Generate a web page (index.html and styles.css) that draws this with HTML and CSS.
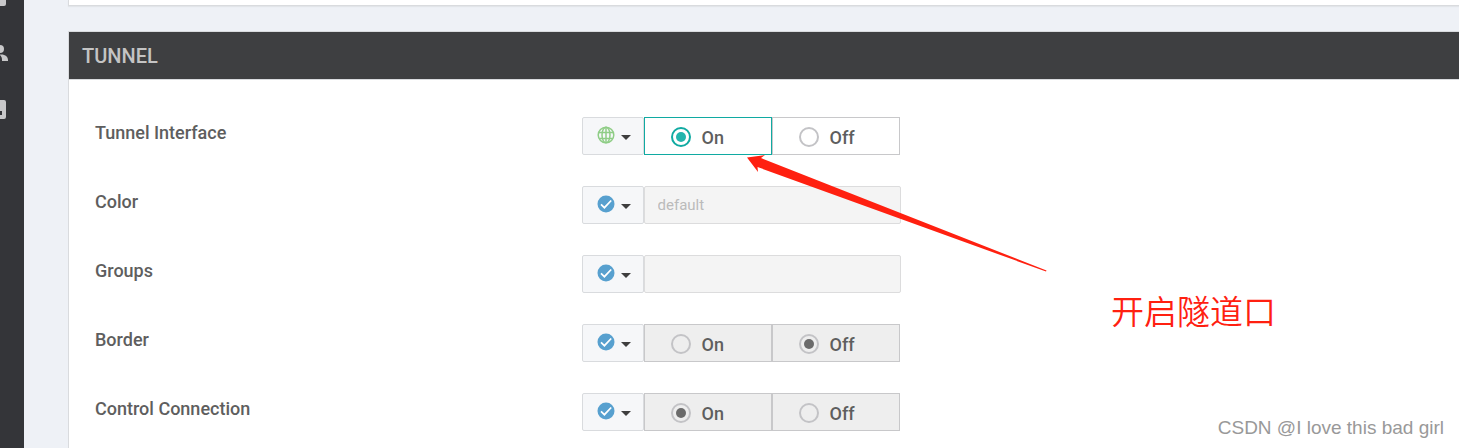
FILE: index.html
```html
<!DOCTYPE html>
<html lang="en">
	<head>
		<meta charset="UTF-8">
		<title>Tunnel</title>
		<link rel="stylesheet" href="styles.css">
	</head>
	<body>
		<svg class="defs" aria-hidden="true">
			<symbol id="check" viewBox="0 0 18 18">
				<circle cx="9" cy="9" r="8.5" fill="#57a0cf"/>
				<path d="M4 9.4l3.4 3.3 6.8-7.2" fill="none" stroke="#fff" stroke-width="1.7"/>
			</symbol>
			<symbol id="globe" viewBox="0 0 18 18">
				<g fill="none" stroke="#8fcd86" stroke-width="1.5">
					<circle cx="9" cy="9" r="7.8"/>
					<ellipse cx="9" cy="9" rx="4" ry="7.8"/>
					<path d="M9 1v16M2 6.500h14M2 12.500h14"/>
				</g>
			</symbol>
		</svg>
		<nav class="sidebar">
			<a href="#" aria-label="Dashboard"><svg width="10" height="20"><rect x="-12" width="18" height="18" rx="2"/></svg></a>
			<a href="#" aria-label="Users"><svg width="10" height="20"><circle cx="0" cy="5" r="4"/><path d="M0 10.500C5 10 8 12.500 8 16v1H2v-1C2 14 1.500 12.500 0 11z"/></svg></a>
			<a href="#" aria-label="Reports"><svg width="10" height="20"><path d="M0 0h4a2 2 0 0 1 2 2v15a2 2 0 0 1-2 2H0v-4h2v-4H0z"/></svg></a>
		</nav>
		<main class="main">
			<section class="panel prev"></section>
			<section class="panel tunnel">
				<h2>TUNNEL</h2>
				<form class="rows">
					<div class="row">
						<span class="name" id="tunnel">Tunnel Interface</span>
						<div class="control" role="radiogroup" aria-labelledby="tunnel">
							<button type="button" class="scope" aria-label="Global"><svg width="18" height="18"><use href="#globe"/></svg><i class="caret"></i></button>
							<label class="option active"><input type="radio" name="tunnel" checked>On</label>
							<label class="option"><input type="radio" name="tunnel">Off</label>
						</div>
					</div>
					<div class="row">
						<label class="name" for="color">Color</label>
						<div class="control">
							<button type="button" class="scope" aria-label="Default"><svg width="18" height="18"><use href="#check"/></svg><i class="caret"></i></button>
							<input type="text" class="text" id="color" value="default" disabled>
						</div>
					</div>
					<div class="row">
						<label class="name" for="groups">Groups</label>
						<div class="control">
							<button type="button" class="scope" aria-label="Default"><svg width="18" height="18"><use href="#check"/></svg><i class="caret"></i></button>
							<input type="text" class="text" id="groups" disabled>
						</div>
					</div>
					<div class="row">
						<span class="name" id="border">Border</span>
						<div class="control" role="radiogroup" aria-labelledby="border">
							<button type="button" class="scope" aria-label="Default"><svg width="18" height="18"><use href="#check"/></svg><i class="caret"></i></button>
							<label class="option disabled"><input type="radio" name="border" disabled>On</label>
							<label class="option disabled"><input type="radio" name="border" checked disabled>Off</label>
						</div>
					</div>
					<div class="row">
						<span class="name" id="connection">Control Connection</span>
						<div class="control" role="radiogroup" aria-labelledby="connection">
							<button type="button" class="scope" aria-label="Default"><svg width="18" height="18"><use href="#check"/></svg><i class="caret"></i></button>
							<label class="option disabled"><input type="radio" name="connection" checked disabled>On</label>
							<label class="option disabled"><input type="radio" name="connection" disabled>Off</label>
						</div>
					</div>
				</form>
			</section>
		</main>
		<svg class="arrow" width="300" height="118" aria-hidden="true"><path d="M0 3.500L18 1l-4 3L299.500 116.500l-.5 1L10.500 13l.5 5z"/></svg>
		<p class="note" lang="zh">开启隧道口</p>
		<p class="watermark">CSDN @I love this bad girl</p>
	</body>
</html>
```
FILE: styles.css
```css
*{box-sizing: border-box;}
body{margin: 0; min-height: 100vh; display: flex; position: relative; overflow: hidden; background: #eef1f6; color: #5e5e5e; font-family: Roboto, "Liberation Sans", sans-serif;}
.defs{position: absolute; width: 0; height: 0;}

/* sidebar */
.sidebar{flex: 0 0 24px; height: 100vh; overflow: hidden; display: flex; flex-direction: column; justify-content: flex-start; gap: 36px; background: #343539;}
.sidebar a{height: 20px;}
.sidebar a:first-child{margin-top: -12px;}
.sidebar svg{display: block; fill: #c8c8ca;}

/* panels */
.main{flex: 1; min-width: 0; padding-left: 44px; display: flex; flex-direction: column; gap: 25px;}
.panel{background: #fff; border: 1px solid #d9dbde; border-right: 0;}
.prev{height: 6px; border-top: 0; box-shadow: 0 1px 1px #e2e5e9;}
.tunnel{flex: 1; border-bottom: 0;}
.tunnel h2{margin: 0; padding: 2px 13px 0; background: #3e3f41; border-bottom: 1px solid #d9dbde; color: #c4c4c4; font-size: 20px; font-weight: 500; line-height: 45px;}

/* rows */
.rows{padding: 37px 0 16px; display: flex; flex-direction: column; gap: 31px;}
.row{display: flex;}
.name{flex: 0 0 35%; padding-left: 26px; font-size: 18px; font-weight: 500; line-height: 31px;}
.control{display: flex; height: 38px; padding-left: 26px;}
.scope{display: flex; align-items: center; gap: 6px; width: 62px; padding: 0 0 2px 14px; background: #f6f7f9; border: 1px solid #d9dbde; border-radius: 2px;}
.caret{margin-top: 5px; border: 5px solid transparent; border-top-color: #3e3e3e; border-bottom: 0;}
.option{display: flex; align-items: center; gap: 11px; width: 128px; padding: 2px 0 0 26px; border: 1px solid #c8c8ca; background: #fff; font-size: 18px; font-weight: 500;}
.option.active{border-color: #10aaa2;}
.option.disabled{background: #eee;}
.option input{appearance: none; width: 20px; height: 20px; margin: 0; border: 2px solid #c3c3c6; border-radius: 50%; display: grid; place-items: center;}
.option input:checked::before{content: ""; width: 10px; height: 10px; border-radius: 50%; background: #6b6b6b;}
.option.active input{border-color: #10aaa2;}
.option.active input:checked::before{background: #22b5ad;}
.text{width: 257px; padding: 0 13px; border: 1px solid #dcdcdd; border-radius: 2px; background: #f4f4f4; color: #bbb; font-family: inherit; font-size: 15px;}

/* notes over the page */
.arrow{position: absolute; left: 747px; top: 154px; fill: #ff2010;}
.note{position: absolute; left: 1111px; top: 286px; margin: 0; color: #ff2010; font-family: "Noto Sans CJK SC", sans-serif; font-size: 33px; line-height: 48px; font-weight: 350;}
.watermark{position: absolute; right: 15px; bottom: 8px; margin: 0; color: #999; font-family: "Liberation Sans", sans-serif; font-size: 19px; line-height: 24px;}
```
